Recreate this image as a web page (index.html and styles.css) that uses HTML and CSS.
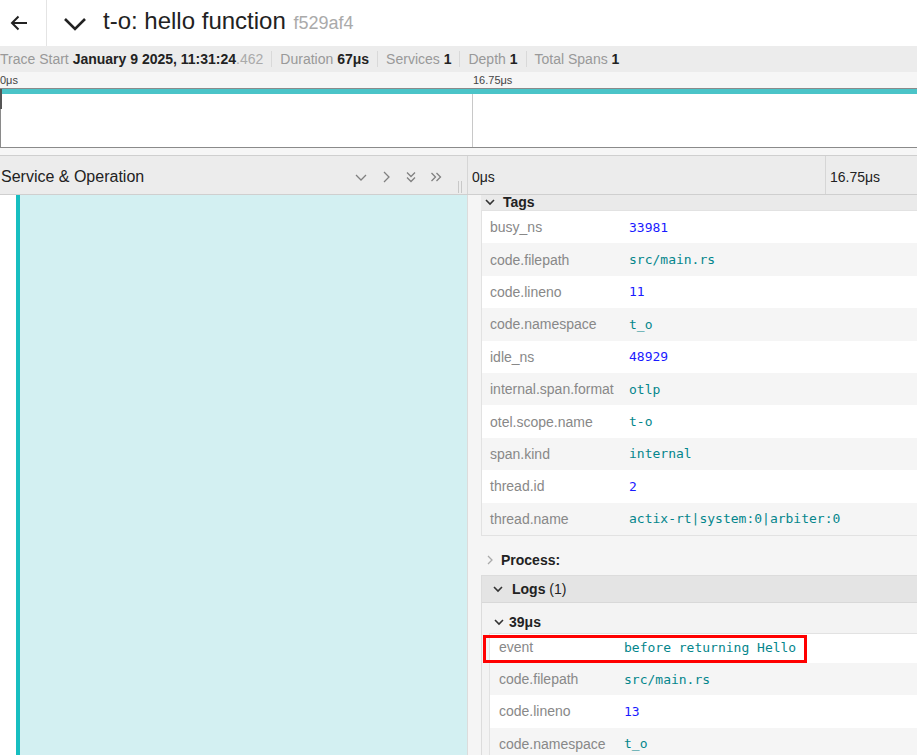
FILE: index.html
```html
<!DOCTYPE html>
<html>
<head>
<meta charset="utf-8">
<link rel="stylesheet" href="styles.css">
</head>
<body>
<div class="page">
  <header class="top">
    <div class="back">
      <svg width="18" height="16" viewBox="0 0 18 16"><path d="M17 8H2M8.5 1.5L2 8l6.5 6.5" fill="none" stroke="#222" stroke-width="2"/></svg>
    </div>
    <div class="title-wrap">
      <svg class="title-chev" width="24" height="14" viewBox="0 0 24 14"><polyline points="2,2 12,12 22,2" fill="none" stroke="#222" stroke-width="2.6"/></svg>
      <h1 class="title">t-o: hello function <span class="trace-id">f529af4</span></h1>
    </div>
  </header>

  <div class="summary">
    <div class="sum-item">Trace Start <b>January 9 2025, 11:31:24</b><span class="ms">.462</span></div>
    <div class="sum-item">Duration <b>67μs</b></div>
    <div class="sum-item">Services <b>1</b></div>
    <div class="sum-item">Depth <b>1</b></div>
    <div class="sum-item">Total Spans <b>1</b></div>
  </div>

  <div class="ticks">
    <span class="tick-a">0μs</span>
    <span class="tick-b">16.75μs</span>
  </div>
  <div class="mini">
    <div class="mini-band"></div>
    <div class="mini-cols">
      <div class="mini-col"></div>
      <div class="mini-col"></div>
    </div>
    <div class="mini-marker"></div>
  </div>
  <div class="gap"></div>

  <div class="tl-head">
    <div class="tl-left">
      <span class="tl-title">Service &amp; Operation</span>
      <div class="tl-icons">
        <svg width="14" height="14" viewBox="0 0 14 14"><polyline points="2,5 7,10 12,5" class="ico"/></svg>
        <svg width="14" height="14" viewBox="0 0 14 14"><polyline points="5,2 10,7 5,12" class="ico"/></svg>
        <svg width="14" height="14" viewBox="0 0 14 14"><polyline points="3,2.5 7,6.5 11,2.5" class="ico"/><polyline points="3,7.5 7,11.5 11,7.5" class="ico"/></svg>
        <svg width="14" height="14" viewBox="0 0 14 14"><polyline points="2.5,3 6.5,7 2.5,11" class="ico"/><polyline points="7.5,3 11.5,7 7.5,11" class="ico"/></svg>
      </div>
      <div class="handle"></div>
    </div>
    <div class="tl-right">
      <div class="tl-tick">0μs</div>
      <div class="tl-tick">16.75μs</div>
    </div>
  </div>

  <div class="main">
    <div class="span-col">
      <div class="span-white"></div>
      <div class="span-bar"></div>
      <div class="span-fill"></div>
    </div>
    <div class="detail">
      <div class="acc-head tags-head">
        <svg class="chev" width="12" height="12" viewBox="0 0 12 12"><polyline points="2,4 6,8 10,4" class="ico-dark"/></svg>
        <b>Tags</b>
      </div>
      <div class="kv kv-tags">
        <div class="row"><span class="k">busy_ns</span><span class="v num">33981</span></div>
        <div class="row"><span class="k">code.filepath</span><span class="v str">src/main.rs</span></div>
        <div class="row"><span class="k">code.lineno</span><span class="v num">11</span></div>
        <div class="row"><span class="k">code.namespace</span><span class="v str">t_o</span></div>
        <div class="row"><span class="k">idle_ns</span><span class="v num">48929</span></div>
        <div class="row"><span class="k">internal.span.format</span><span class="v str">otlp</span></div>
        <div class="row"><span class="k">otel.scope.name</span><span class="v str">t-o</span></div>
        <div class="row"><span class="k">span.kind</span><span class="v str">internal</span></div>
        <div class="row"><span class="k">thread.id</span><span class="v num">2</span></div>
        <div class="row"><span class="k">thread.name</span><span class="v str">actix-rt|system:0|arbiter:0</span></div>
      </div>

      <div class="process-head">
        <svg class="chev-r" width="10" height="12" viewBox="0 0 10 12"><polyline points="3,2 7,6 3,10" class="ico-light"/></svg>
        <b>Process:</b>
      </div>

      <div class="logs">
        <div class="logs-head">
          <svg class="chev" width="12" height="12" viewBox="0 0 12 12"><polyline points="2,4 6,8 10,4" class="ico-dark"/></svg>
          <b>Logs</b>&nbsp;(1)
        </div>
        <div class="logs-body">
          <div class="log-head">
            <svg class="chev" width="12" height="12" viewBox="0 0 12 12"><polyline points="2,4 6,8 10,4" class="ico-dark"/></svg>
            <b>39μs</b>
          </div>
          <div class="kv kv-log">
            <div class="row"><span class="k">event</span><span class="v str">before returning Hello</span></div>
            <div class="row"><span class="k">code.filepath</span><span class="v str">src/main.rs</span></div>
            <div class="row"><span class="k">code.lineno</span><span class="v num">13</span></div>
            <div class="row"><span class="k">code.namespace</span><span class="v str">t_o</span></div>
          </div>
        </div>
      </div>
    </div>
  </div>

  <div class="highlight"></div>
</div>
</body>
</html>
```

FILE: styles.css
```css
* { box-sizing: border-box; }
html, body { margin: 0; padding: 0; background: #fff; }
body { font-family: "Liberation Sans", Arial, sans-serif; color: #222; }

.page {
  width: 917px;
  height: 755px;
  overflow: hidden;
  position: relative;
  display: flex;
  flex-direction: column;
}

/* top header */
.top {
  display: flex;
  height: 46px;
  flex: none;
  align-items: center;
}
.back {
  width: 47px;
  height: 46px;
  border-right: 1px solid #e4e4e4;
  display: flex;
  align-items: center;
  padding-left: 10px;
}
.title-wrap {
  display: flex;
  align-items: center;
  padding-left: 16px;
}
.title-chev { margin-right: 16px; margin-top: 1px; }
.title {
  margin: 0 0 2px 0;
  font-size: 24px;
  font-weight: normal;
  color: #222;
  line-height: 40px;
  white-space: nowrap;
}
.trace-id {
  font-size: 18px;
  color: #aaa;
  margin-left: 1px;
}

/* summary */
.summary {
  flex: none;
  height: 26px;
  background: #ececec;
  display: flex;
  align-items: center;
  font-size: 14px;
  color: #999;
  white-space: nowrap;
}
.sum-item {
  padding: 0 8px 0 8px;
  border-left: 1px solid #d9d9d9;
  line-height: 16px;
}
.sum-item:first-child { border-left: none; padding-left: 0; }
.sum-item b { color: #222; }
.sum-item .ms { color: #aaa; }

/* minimap */
.ticks {
  flex: none;
  height: 16px;
  background: #f6f6f6;
  display: grid;
  grid-template-columns: 473px 1fr;
  font-size: 11px;
  color: #444;
  line-height: 14px;
  padding-top: 1px;
}
.mini {
  flex: none;
  height: 60px;
  position: relative;
  border-left: 1px solid #8a8a8a;
  border-bottom: 1px solid #8a8a8a;
  border-top: 1px solid #8a8a8a;
  background: #fff;
  display: flex;
  flex-direction: column;
}
.mini-band {
  height: 5px;
  background: #4bc4c8;
  flex: none;
}
.mini-cols {
  flex: 1;
  display: grid;
  grid-template-columns: 471px 1fr;
}
.mini-col + .mini-col { border-left: 1px solid #c8c8c8; }
.mini-marker {
  position: absolute;
  left: -1px;
  top: 0;
  width: 2px;
  height: 20px;
  background: #555;
}
.gap {
  flex: none;
  height: 7px;
  background: #f6f6f6;
}

/* timeline header */
.tl-head {
  flex: none;
  height: 40px;
  background: #ececec;
  border-top: 1px solid #cfcfcf;
  border-bottom: 1px solid #cfcfcf;
  display: flex;
}
.tl-left {
  width: 468px;
  flex: none;
  border-right: 1px solid #d6d6d6;
  display: flex;
  align-items: center;
  padding-top: 4px;
  position: relative;
}
.tl-title {
  font-size: 16px;
  color: #222;
  padding-left: 1px;
}
.tl-icons {
  margin-left: auto;
  margin-right: 24px;
  display: flex;
  gap: 11px;
}
.ico { fill: none; stroke: #808080; stroke-width: 1.3; }
.handle {
  position: absolute;
  right: 5px;
  bottom: 1px;
  width: 4px;
  height: 12px;
  border-left: 1px solid #c8c8c8;
  border-right: 1px solid #c8c8c8;
}
.tl-right {
  display: grid;
  grid-template-columns: 357px 358px;
}
.tl-tick {
  font-size: 14px;
  color: #222;
  padding-left: 4px;
  padding-top: 4px;
  display: flex;
  align-items: center;
}
.tl-tick + .tl-tick { border-left: 1px solid #d6d6d6; }

/* main body */
.main {
  flex: 1;
  display: flex;
  min-height: 0;
}
.span-col {
  width: 468px;
  flex: none;
  display: flex;
  border-right: 1px solid #dcdcdc;
}
.span-white { width: 16px; background: #fff; }
.span-bar { width: 4px; background: #17bec0; }
.span-fill { flex: 1; background: #d3f0f2; }

.detail {
  flex: 1;
  background: #f5f5f5;
  padding-left: 13px;
  font-size: 14px;
  overflow: hidden;
}
.acc-head {
  display: flex;
  align-items: center;
  white-space: nowrap;
}
.tags-head {
  height: 16px;
  background: #eaeaea;
  padding-left: 3px;
  margin-top: -1px;
}
.tags-head b { margin-left: 7px; }
.ico-dark { fill: none; stroke: #333; stroke-width: 1.6; }
.ico-light { fill: none; stroke: #aaa; stroke-width: 1.3; }

.kv {
  background: #fff;
  border: 1px solid #e2e2e2;
  border-right: none;
}
.kv .row {
  display: flex;
  align-items: center;
  height: 32.4px;
  white-space: nowrap;
}
.kv .row:nth-child(even) { background: #f5f5f5; }
.k { color: #888; flex: none; }
.v { font-family: "DejaVu Sans Mono", monospace; font-size: 13px; }
.num { color: #1a1aff; }
.str { color: #04868c; }
.kv-tags .k { width: 147px; padding-left: 8px; }
.kv-log .k { width: 134px; padding-left: 9px; }

.process-head {
  height: 39px;
  display: flex;
  align-items: center;
  padding-top: 10px;
  padding-left: 4px;
}
.process-head b { margin-left: 6px; }

.logs {
  border-left: 1px solid #dcdcdc;
  border-top: 1px solid #dcdcdc;
}
.logs-head {
  height: 27px;
  background: #e4e4e4;
  border-bottom: 1px solid #d8d8d8;
  display: flex;
  align-items: center;
  padding-left: 10px;
  white-space: nowrap;
}
.logs-head b { margin-left: 8px; }
.logs-body {
  background: #f3f3f3;
  padding-left: 7px;
}
.log-head {
  height: 30px;
  display: flex;
  align-items: center;
  padding-left: 4px;
  padding-top: 8px;
}
.log-head b { margin-left: 4px; }
.kv-log .row:first-child { height: 29px; padding-bottom: 2px; }

/* annotation overlay */
.highlight {
  position: absolute;
  left: 483px;
  top: 635px;
  width: 324px;
  height: 28px;
  border: 3px solid #f00;
}
```
